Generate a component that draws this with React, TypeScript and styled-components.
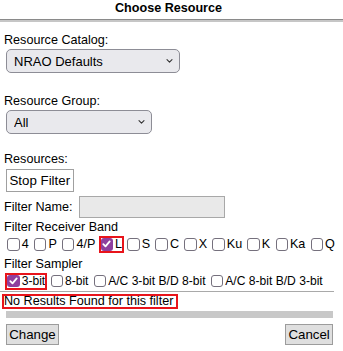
import React from 'react';
import styled, { createGlobalStyle } from 'styled-components';

const Global = createGlobalStyle`
  html, body { margin: 0; padding: 0; background: #fff; }
  body { font-family: "Liberation Sans", Arial, Helvetica, sans-serif; color: #000; }
`;

const Page = styled.div`
  width: 343px;
  height: 351px;
  display: flex;
  flex-direction: column;
  font-size: 12.6px;
  line-height: 15px;
  overflow: hidden;
`;

const Title = styled.div`
  width: 337px;
  text-align: center;
  font-weight: bold;
  line-height: 16px;
`;

const TitleRule = styled.div`
  margin-top: 3px;
  height: 2px;
  border-top: 1px solid #8a8a8a;
  background: #c6c6c6;
`;

const Body = styled.div`
  display: flex;
  flex-direction: column;
  align-items: flex-start;
  padding-left: 4px;
`;

const FieldLabel = styled.div<{ $mt: number }>`
  margin-top: ${(p) => p.$mt}px;
`;

const SelectWrap = styled.div<{ $w: number }>`
  position: relative;
  width: ${(p) => p.$w}px;
  height: 24px;
  margin: 1px 0 0 2px;
`;

const Select = styled.select`
  appearance: none;
  -webkit-appearance: none;
  width: 100%;
  height: 100%;
  box-sizing: border-box;
  margin: 0;
  padding: 0 0 0 7px;
  border: 1px solid #8d8d96;
  border-radius: 5px;
  background: #e9e9ed;
  color: #000;
  font: 13px "Liberation Sans", Arial, sans-serif;
  outline: none;
`;

const Chevron = styled.svg`
  position: absolute;
  right: 7px;
  top: 50%;
  transform: translateY(-50%);
  pointer-events: none;
`;

const StopButton = styled.button`
  margin: 2.5px 0 0 2px;
  height: 23px;
  box-sizing: border-box;
  padding: 0 2.5px;
  background: #fff;
  border: 1px solid #a0a0a0;
  border-radius: 0;
  color: #000;
  font: 13.3px "Liberation Sans", Arial, sans-serif;
  line-height: 21px;
`;

const NameRow = styled.div`
  margin-top: 4px;
  display: flex;
  align-items: center;
  gap: 6.4px;
`;

const NameInput = styled.input`
  width: 146px;
  height: 22px;
  box-sizing: border-box;
  margin: 0;
  background: #e9e9e9;
  border: 1px solid #a8a8a8;
  border-radius: 0;
`;

const CheckRow = styled.div<{ $fs: number }>`
  display: flex;
  align-items: center;
  column-gap: 5.3px;
  height: 19px;
  padding-left: 3.3px;
  font-size: ${(p) => p.$fs}px;
  white-space: nowrap;
`;

const Item = styled.label<{ $hl?: boolean }>`
  display: inline-flex;
  align-items: center;
  gap: 2px;
  height: 13px;
  outline: ${(p) => (p.$hl ? '2px solid #e8141b' : 'none')};
  outline-offset: 0.5px;
`;

const Box = styled.span<{ $on?: boolean }>`
  display: inline-flex;
  align-items: center;
  justify-content: center;
  width: 12.4px;
  height: 12.4px;
  box-sizing: border-box;
  border-radius: 3px;
  border: ${(p) => (p.$on ? 'none' : '1.5px solid #75707d')};
  background: ${(p) => (p.$on ? '#8e3f9e' : '#fff')};
`;

const Rule = styled.div`
  width: 334px;
  height: 1.7px;
  background: #a9a9a9;
`;

const Message = styled.div`
  align-self: flex-start;
  margin: 1.7px 0 0 1.7px;
  border: 2px solid #e8141b;
  padding: 0 2.3px 0 0.3px;
  line-height: 11px;
  height: 11px;
`;

const Bar = styled.div`
  margin: 2px 0 0 6px;
  width: 327px;
  height: 7.4px;
  background: #c8c8c8;
`;

const Footer = styled.div`
  margin: 5.3px 0 0 6px;
  width: 327px;
  display: flex;
  justify-content: space-between;
`;

const Button = styled.button`
  height: 21px;
  box-sizing: border-box;
  margin: 0;
  padding: 0 2.2px;
  background: #dfdfdf;
  border: 1px solid #9c9c9c;
  border-radius: 0;
  color: #000;
  font: 13.3px "Liberation Sans", Arial, sans-serif;
  line-height: 19px;
`;

const ChevronIcon = () => (
  <Chevron width="7" height="5" viewBox="0 0 7 5">
    <path d="M1 1.2 L3.5 3.7 L6 1.2" fill="none" stroke="#333" strokeWidth="1.1" strokeLinecap="round" strokeLinejoin="round" />
  </Chevron>
);

const Check = ({ label, on, hl }: { label: string; on?: boolean; hl?: boolean }) => (
  <Item $hl={hl}>
    <Box $on={on} role="checkbox" aria-checked={!!on}>
      {on && (
        <svg width="9" height="8" viewBox="0 0 9 8">
          <path d="M1.3 4.2 L3.5 6.4 L7.7 1.4" fill="none" stroke="#fff" strokeWidth="1.8" strokeLinecap="round" strokeLinejoin="round" />
        </svg>
      )}
    </Box>
    <span>{label}</span>
  </Item>
);

const bands = ['4', 'P', '4/P', 'L', 'S', 'C', 'X', 'Ku', 'K', 'Ka', 'Q'];
const samplers = ['3-bit', '8-bit', 'A/C 3-bit B/D 8-bit', 'A/C 8-bit B/D 3-bit'];

export default function App() {
  return (
    <>
      <Global />
      <Page>
        <Title>Choose Resource</Title>
        <TitleRule />
        <Body>
          <FieldLabel $mt={11}>Resource Catalog:</FieldLabel>
          <SelectWrap $w={174}>
            <Select defaultValue="nrao">
              <option value="nrao">NRAO Defaults</option>
            </Select>
            <ChevronIcon />
          </SelectWrap>
          <FieldLabel $mt={21}>Resource Group:</FieldLabel>
          <SelectWrap $w={146}>
            <Select defaultValue="all">
              <option value="all">All</option>
            </Select>
            <ChevronIcon />
          </SelectWrap>
          <FieldLabel $mt={17.5}>Resources:</FieldLabel>
          <StopButton>Stop Filter</StopButton>
          <NameRow>
            <span>Filter Name:</span>
            <NameInput />
          </NameRow>
          <FieldLabel $mt={2}>Filter Receiver Band</FieldLabel>
          <CheckRow $fs={12.6}>
            {bands.map((b) => (
              <Check key={b} label={b} on={b === 'L'} hl={b === 'L'} />
            ))}
          </CheckRow>
          <FieldLabel $mt={2.5}>Filter Sampler</FieldLabel>
          <CheckRow $fs={12.1}>
            {samplers.map((s) => (
              <Check key={s} label={s} on={s === '3-bit'} hl={s === '3-bit'} />
            ))}
          </CheckRow>
        </Body>
        <Rule />
        <Message>No Results Found for this filter</Message>
        <Bar />
        <Footer>
          <Button>Change</Button>
          <Button>Cancel</Button>
        </Footer>
      </Page>
    </>
  );
}
